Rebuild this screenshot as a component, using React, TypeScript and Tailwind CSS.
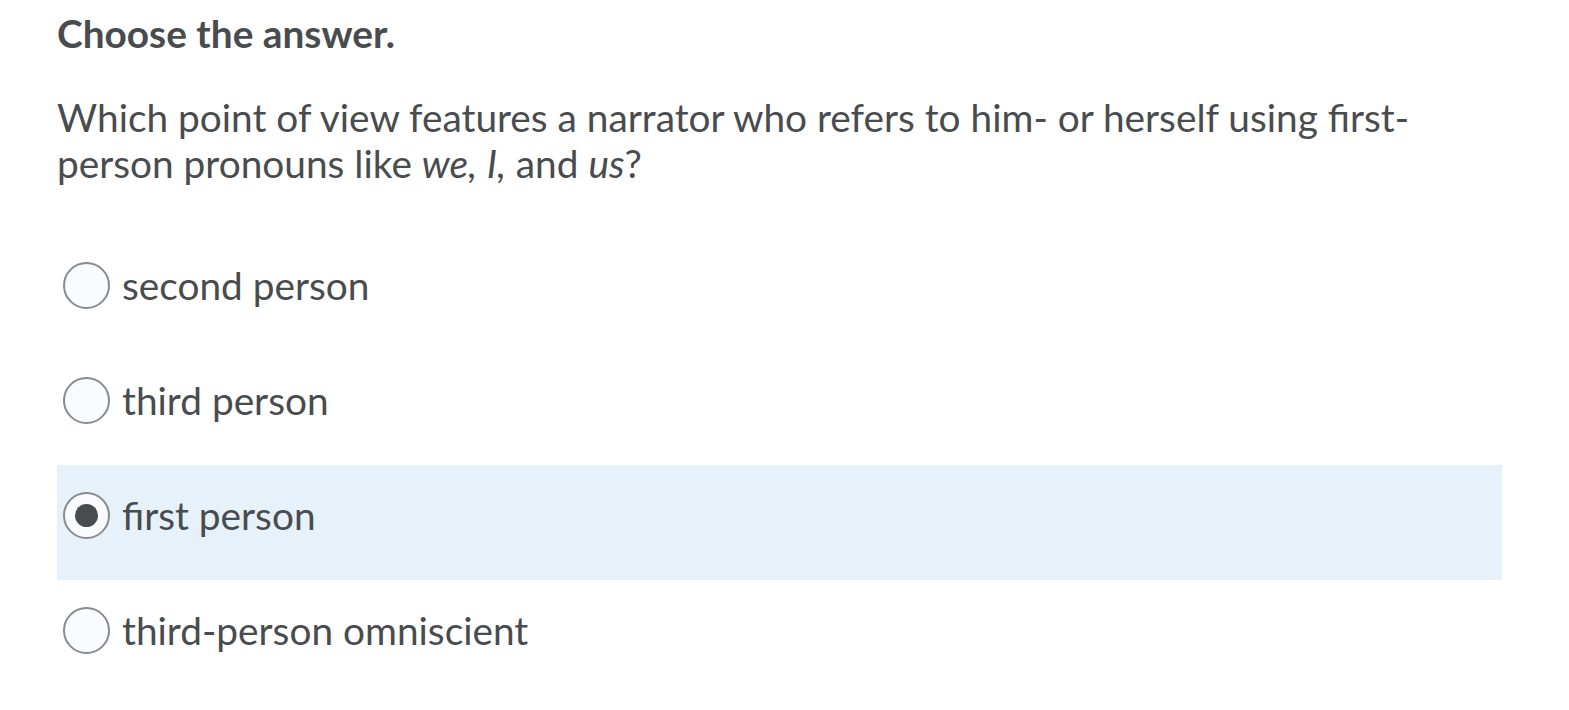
const options = [
  { label: "second person", checked: false },
  { label: "third person", checked: false },
  { label: "first person", checked: true },
  { label: "third-person omniscient", checked: false },
];

const Radio = ({ checked }: { checked: boolean }) => (
  <span className="flex h-[47px] w-[47px] shrink-0 items-center justify-center rounded-full border-2 border-[#868c8f] bg-[#f9fbff]">
    {checked && <span className="h-[23px] w-[23px] rounded-full bg-[#494c4e]" />}
  </span>
);

export default function App() {
  return (
    <div
      className="min-h-screen bg-white pl-[57px] pr-[67px] text-[#494c4e]"
      style={{ fontFamily: "Lato, 'Open Sans', sans-serif" }}
    >
      <h1 className="pt-[10px] text-[38.8px] font-bold leading-[46px]">Choose the answer.</h1>
      <p className="mt-[38px] text-[38.8px] leading-[46px]">
        Which point of view features a narrator who refers to him- or herself using first-
        <br />
        person pronouns like <em>we,</em> <em>I,</em> and <em>us</em>?
      </p>
      <div className="mt-[49px] flex flex-col">
        {options.map((o) => (
          <label
            key={o.label}
            className={`flex h-[115px] items-start gap-[12px] pl-[6px] pt-[27px] ${o.checked ? "bg-[#e6f1fa]" : ""}`}
          >
            <Radio checked={o.checked} />
            <span className="text-[38.8px] leading-[46px]">{o.label}</span>
          </label>
        ))}
      </div>
    </div>
  );
}
